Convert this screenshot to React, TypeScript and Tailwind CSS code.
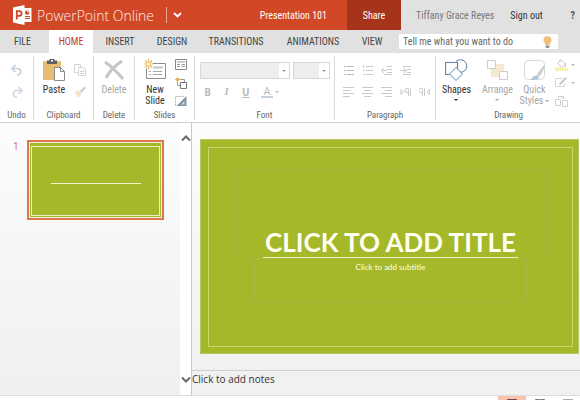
import { ReactNode, useState } from "react";
import clsx from "clsx";

const tabs = [
  { name: "HOME", className: "w-11" },
  { name: "INSERT", className: "w-[54px]" },
  { name: "DESIGN", className: "w-[50px]" },
  { name: "TRANSITIONS", className: "w-[78px]" },
  { name: "ANIMATIONS", className: "w-[76px]" },
  { name: "VIEW", className: "w-[42px]" },
];

const Caret = ({ className }: { className?: string }) => (
  <svg viewBox="0 0 4 2" className={clsx("h-[2px] w-1", className)}>
    <path d="M0 0h4L2 2z" fill="currentColor" />
  </svg>
);

const Group = ({
  label,
  className,
  children,
}: {
  label: string;
  className: string;
  children: ReactNode;
}) => (
  <section
    className={clsx("flex shrink-0 flex-col justify-between", className)}
  >
    <div className="flex">{children}</div>
    <h2 className="text-center text-[9px] leading-[10px] text-[#666]">
      {label}
    </h2>
  </section>
);

const IconButton = ({
  label,
  className,
  children,
}: {
  label: string;
  className?: string;
  children: ReactNode;
}) => (
  <button
    type="button"
    aria-label={label}
    className={clsx("flex items-center", className)}
  >
    {children}
  </button>
);

const BigButton = ({
  className,
  icon,
  children,
}: {
  className?: string;
  icon: ReactNode;
  children: ReactNode;
}) => (
  <button
    type="button"
    className={clsx(
      "flex flex-col items-center gap-[3px] text-[10px] leading-[11px]",
      className
    )}
  >
    {icon}
    <span className="flex flex-col items-center">{children}</span>
  </button>
);

const Logo = () => (
  <svg viewBox="0 0 20 20" className="h-5 w-5">
    <path d="M11 3h7.500v14H11z" fill="#fff" />
    <path d="M0 2.500 11.500 0v20L0 17.500z" fill="#fff" />
    <path
      d="M3.800 14.500V6.200h2.400a2.300 2.300 0 0 1 0 4.700H4"
      fill="none"
      stroke="#d24726"
      strokeWidth="1.800"
    />
    <circle cx="14.200" cy="7.500" r="2.300" fill="#d24726" />
    <path d="M14.500 4v3h3" stroke="#fff" fill="none" strokeWidth=".8" />
    <path d="M12 11.500h5M12 13.500h5" stroke="#d24726" />
  </svg>
);

const PasteIcon = () => (
  <svg viewBox="0 0 22 22" className="h-[22px] w-[22px]">
    <path d="M0 2h18v19H0z" fill="#e8bd72" />
    <path d="M4 1.500h2.500V0h5v1.500H14V5H4z" fill="#5f5f5f" />
    <path d="M8 1h2v1.500H8z" fill="#fff" />
    <path d="M11.500 8.500h6l4 4v9h-10z" fill="#fff" stroke="#8a8a8a" />
    <path d="M17.500 8.500v4h4" fill="none" stroke="#8a8a8a" />
  </svg>
);

const NewSlideIcon = () => (
  <svg viewBox="0 0 23 22" className="h-[22px] w-[23px]">
    <path d="M2.500 4.500h19v15h-19z" fill="#fff" stroke="#8d8d8d" />
    <path d="M9 7.500h10v2H9z" fill="#c4c4c4" />
    <path d="M5 12.500h2M9 12.500h9M5 15.500h2M9 15.500h9" stroke="#a8a8a8" />
    <circle cx="4.500" cy="5" r="4.500" fill="#fff" />
    <path
      d="M4.500 0v10M0 5h9M1 1.500l7 7M8 1.500l-7 7"
      stroke="#e8b65c"
      strokeWidth="1.200"
    />
    <circle cx="4.500" cy="5" r="1.500" fill="#fff" />
  </svg>
);

const ShapesIcon = () => (
  <svg
    viewBox="0 0 23 22"
    className="h-[22px] w-[23px]"
    fill="#fff"
    stroke="#5f86a8"
  >
    <circle cx="15.500" cy="7" r="6.300" />
    <path d="M.5 3.500h12v12H.5z" strokeWidth="1.200" />
    <path d="m11 8.500 6.500 6.500-6.500 6.500L4.500 15z" />
  </svg>
);

const ArrangeIcon = () => (
  <svg viewBox="0 0 22 22" className="h-[22px] w-[22px]">
    <path d="M4 5h13v13H4z" fill="#f7e8d2" />
    <path d="M.5 1.500h8v8h-8zM12.500 12.500h8v8h-8z" fill="#fff" stroke="#ccc" />
  </svg>
);

const QuickStylesIcon = () => (
  <svg viewBox="0 0 24 22" className="h-[22px] w-6">
    <rect
      x="1.500"
      y="1.500"
      width="20"
      height="19"
      rx="4"
      fill="#fff"
      stroke="#d8d8d8"
    />
    <path d="M8 21c1-4 4-4 6-5l2 3c-2 2-5 2-8 2z" fill="#b3c4d3" />
    <path d="m14 15 7-9 1.500 1L16.500 18z" fill="#c8cdd1" />
  </svg>
);

const Lines = ({ d, color = "#cacaca" }: { d: string; color?: string }) => (
  <svg viewBox="0 0 12 12" className="h-3 w-3">
    <path d={d} fill="none" stroke={color} />
  </svg>
);

const Header = () => (
  <header className="flex h-[30px] shrink-0 bg-[#e1e1e1] text-[10px]">
    <div className="flex flex-1 items-center bg-[#d24726] pr-5 pl-[13px] text-white">
      <Logo />
      <span className="ml-1 font-['Open_Sans','Noto_Sans',sans-serif] text-[14px] font-light whitespace-nowrap text-[#fdebe6]">
        PowerPoint Online
      </span>
      <span className="ml-3 h-4 w-px bg-[#eba593]" />
      <IconButton label="Switch app" className="ml-[6px]">
        <svg viewBox="0 0 9 6" className="h-[6px] w-[9px]">
          <path
            d="m1 1 3.500 3.500L8 1"
            fill="none"
            stroke="#fff"
            strokeWidth="1.800"
          />
        </svg>
      </IconButton>
      <span className="ml-auto whitespace-nowrap">Presentation 101</span>
    </div>
    <button type="button" className="h-[31px] w-[54px] bg-[#a5341a] text-white">
      Share
    </button>
    <div className="flex w-[179px] items-center pr-[5px] pl-[15px] whitespace-nowrap">
      <span className="text-[#777]">Tiffany Grace Reyes</span>
      <a href="#signout" className="ml-4 text-[#333]">
        Sign out
      </a>
      <button
        type="button"
        aria-label="Help"
        className="ml-auto font-bold text-[#555]"
      >
        ?
      </button>
    </div>
  </header>
);

const TabBar = () => {
  const [activeTab, setActiveTab] = useState<string>("HOME");

  return (
    <nav className="flex h-[23px] shrink-0 bg-[#e1e1e1] text-[10px] text-[#444]">
      <button type="button" className="w-[49px] pr-1 text-center">
        FILE
      </button>
      {tabs.map((tab) => (
        <button
          key={tab.name}
          type="button"
          onClick={() => setActiveTab(tab.name)}
          className={clsx("flex items-center justify-center", tab.className, {
            "bg-white text-[#c43e1c]": activeTab === tab.name,
          })}
        >
          {tab.name}
        </button>
      ))}
      <label className="my-1 mr-[22px] ml-[6px] flex min-w-0 flex-1 items-center bg-white pr-[6px] pl-1">
        <input
          type="text"
          aria-label="Tell me what you want to do"
          placeholder="Tell me what you want to do"
          className="min-w-0 flex-1 outline-none placeholder:text-[#666]"
        />
        <svg viewBox="0 0 9 12" className="h-3 w-[9px]">
          <path
            d="M4.500 0a4 4 0 0 1 2.300 7.300V9H2.200V7.300A4 4 0 0 1 4.500 0z"
            fill="#eec07c"
          />
          <path d="M2.500 9.500h4V11l-1 1h-2l-1-1z" fill="#8c8c8c" />
        </svg>
      </label>
    </nav>
  );
};

const Ribbon = () => (
  <div className="flex h-[70px] shrink-0 divide-x divide-[#d9d9d9] overflow-hidden border-b border-[#d0d0d0] bg-white pt-[3px] pb-[2px] text-[#333]">
    <Group label="Undo" className="w-[34px]">
      <div className="flex flex-col gap-[10px] pt-2 pl-[11px]">
        <IconButton label="Undo">
          <svg viewBox="0 0 12 12" className="h-3 w-3">
            <path
              d="M4.500 1 1 4.500 4.500 8M1 4.500h6a3.300 3.300 0 0 1 0 6.500H6"
              fill="none"
              stroke="#c3cfdd"
              strokeWidth="1.700"
            />
          </svg>
        </IconButton>
        <IconButton label="Redo">
          <svg viewBox="0 0 12 12" className="h-3 w-3">
            <path
              d="M7.500 1 11 4.500 7.500 8M11 4.500H5A3.300 3.300 0 0 0 5 11h1"
              fill="none"
              stroke="#cfd9e3"
              strokeWidth="1.700"
            />
          </svg>
        </IconButton>
      </div>
    </Group>

    <Group label="Clipboard" className="w-[60px]">
      <BigButton className="w-10 pt-[3px]" icon={<PasteIcon />}>
        Paste
      </BigButton>
      <div className="flex flex-col gap-[10px] pt-2">
        <IconButton label="Copy">
          <svg
            viewBox="0 0 12 12"
            className="h-3 w-3"
            fill="#fff"
            stroke="#d2d2d2"
          >
            <path d="M.5.5h6v8h-6z" />
            <path d="M4.500 3.500h4l3 2v6h-7zM6 7.500h4M6 9.500h4" />
          </svg>
        </IconButton>
        <IconButton label="Format painter">
          <svg viewBox="0 0 12 12" className="h-3 w-3">
            <path d="m1 6 3-2 4 4-4 4z" fill="#f4e3c8" />
            <path d="m6 5 4.500-4.500L12 2 7.500 7z" fill="#cdcdcd" />
          </svg>
        </IconButton>
      </div>
    </Group>

    <Group label="Delete" className="w-[41px]">
      <BigButton
        className="w-10 pt-[3px] text-[#a6a6a6]"
        icon={
          <svg viewBox="0 0 22 22" className="h-[22px] w-[22px]">
            <path
              d="M2 3c6 4 12 10 18 17M19 2C13 6 6 13 3 19"
              fill="none"
              stroke="#c6c6c6"
              strokeWidth="3"
            />
          </svg>
        }
      >
        Delete
      </BigButton>
    </Group>

    <Group label="Slides" className="w-[60px]">
      <BigButton className="w-10 pt-[3px]" icon={<NewSlideIcon />}>
        <span>New</span>
        <span>Slide</span>
      </BigButton>
      <div className="flex flex-col gap-[6px] pt-[3px]">
        <IconButton label="Layout">
          <svg viewBox="0 0 12 12" className="h-3 w-3">
            <path d="M.5.5h11v10H.5z" fill="#fff" stroke="#8a8a8a" />
            <path
              d="M2 3h8M2 5.500h3M2 7.500h3M6.500 5.500H10M6.500 7.500H10"
              stroke="#9a9a9a"
            />
          </svg>
        </IconButton>
        <IconButton label="Duplicate slide">
          <svg viewBox="0 0 12 12" className="h-3 w-3">
            <path d="M2.500 2.500h7v6h-7z" fill="#fff" stroke="#999" />
            <path d="M5.500 5.500h6v6h-6z" fill="#fff" stroke="#777" />
            <path d="M2.500 0v5M0 2.500h5M1 1l3 3M4 1 1 4" stroke="#e8b65c" />
          </svg>
        </IconButton>
        <IconButton label="Hide slide">
          <svg viewBox="0 0 12 12" className="h-3 w-3">
            <path
              d="M.5 10.500V1.500h9"
              fill="none"
              stroke="#b5b5b5"
              strokeDasharray="2 1"
            />
            <path d="M11.500 1v10H1.500z" fill="#8294a5" />
            <path d="M6 9.500 9.500 6v3.500z" fill="#cdd8e2" />
          </svg>
        </IconButton>
      </div>
    </Group>

    <Group label="Font" className="w-[140px]">
      <div className="flex flex-col gap-[7px] pt-[6px] pl-[5px]">
        <div className="flex gap-[3px] text-[#999]">
          <label className="relative flex">
            <select
              disabled
              aria-label="Font name"
              className="h-[17px] w-[90px] appearance-none border border-[#d6d6d6] bg-[#eee]"
            />
            <span className="absolute top-px right-px flex h-[15px] w-[10px] items-center justify-center bg-white">
              <Caret />
            </span>
          </label>
          <label className="relative flex">
            <select
              disabled
              aria-label="Font size"
              className="h-[17px] w-[37px] appearance-none border border-[#d6d6d6] bg-[#eee]"
            />
            <span className="absolute top-px right-px flex h-[15px] w-[10px] items-center justify-center bg-white">
              <Caret />
            </span>
          </label>
        </div>
        <div className="flex items-center gap-3 pl-1 font-['Open_Sans','Noto_Sans',sans-serif] text-[10px] leading-3 text-[#bababa]">
          <button type="button" className="w-[7px] font-bold">
            B
          </button>
          <button type="button" className="w-[7px] font-serif font-bold italic">
            I
          </button>
          <button type="button" className="w-[7px] font-bold underline">
            U
          </button>
          <button
            type="button"
            aria-label="Font color"
            className="flex items-center gap-[2px]"
          >
            <span className="w-3 border-b-2 border-[#c5d0da] text-[11px] leading-[10px]">
              A
            </span>
            <Caret />
          </button>
        </div>
      </div>
    </Group>

    <Group label="Paragraph" className="w-[101px]">
      <div className="flex flex-col gap-[10px] pt-2 pl-2">
        <div className="flex gap-[7px]">
          <IconButton label="Bullets">
            <Lines
              color="#b8b8b8"
              d="M1 2.500h2M4 2.500h7M1 6.500h2M4 6.500h7M1 10.500h2M4 10.500h7"
            />
          </IconButton>
          <IconButton label="Numbering">
            <Lines d="M1.500 1v3M4 2.500h7M1 6.500h2M4 6.500h7M1 10.500h2M4 10.500h7" />
          </IconButton>
          <IconButton label="Decrease indent">
            <Lines d="M5 2.500h6M6 5.500h5M6 8.500h5M3 10.500h8M6 6.500H.5M3 4 .5 6.500 3 9" />
          </IconButton>
          <IconButton label="Increase indent">
            <Lines d="M3 2.500h8M7 5.500h4M7 8.500h4M3 10.500h8M.5 6.500H6M3.500 4 6 6.500 3.500 9" />
          </IconButton>
        </div>
        <div className="flex gap-[7px]">
          <IconButton label="Align left">
            <Lines d="M0 1.500h11M0 4.500h7M0 7.500h11M0 10.500h7" />
          </IconButton>
          <IconButton label="Align center">
            <Lines d="M0 1.500h11M2 4.500h7M0 7.500h11M2 10.500h7" />
          </IconButton>
          <IconButton label="Align right">
            <Lines d="M0 1.500h11M4 4.500h7M0 7.500h11M4 10.500h7" />
          </IconButton>
          <IconButton label="Left to right">
            <Lines d="M1 3.500 3.500 6 1 8.500zM10.500 10V2.500M8.500 10V2.500H7a1.500 1.500 0 0 0 0 4h1.500" />
          </IconButton>
          <IconButton label="Right to left">
            <Lines d="M10.500 3.500 8 6l2.500 2.500zM5.500 10V2.500M3.500 10V2.500H2a1.500 1.500 0 0 0 0 4h1.500" />
          </IconButton>
        </div>
      </div>
    </Group>

    <Group label="Drawing" className="w-[145px]">
      <BigButton className="w-[41px] pt-[3px]" icon={<ShapesIcon />}>
        <span>Shapes</span>
        <Caret className="mt-1" />
      </BigButton>
      <BigButton
        className="w-[41px] pt-[3px] text-[#a6a6a6]"
        icon={<ArrangeIcon />}
      >
        <span>Arrange</span>
        <Caret className="mt-1" />
      </BigButton>
      <BigButton
        className="w-[33px] pt-[3px] text-[#a6a6a6]"
        icon={<QuickStylesIcon />}
      >
        <span>Quick</span>
        <span className="flex items-center gap-[2px]">
          Styles <Caret />
        </span>
      </BigButton>
      <div className="flex flex-col gap-[6px] pt-[2px] pl-1 text-[#bbb]">
        <IconButton label="Shape fill" className="gap-[3px]">
          <svg viewBox="0 0 13 13" className="h-[13px] w-[13px]">
            <path d="M0 9.500h13V13H0z" fill="#f8f5a8" />
            <path d="m2.500 5 4-3 4 4-4 3.500z" fill="#fff" stroke="#c9c9c9" />
            <path d="M5 4V1M10.500 5v4" stroke="#c9c9c9" />
          </svg>
          <Caret />
        </IconButton>
        <IconButton label="Shape outline" className="gap-[3px]">
          <svg viewBox="0 0 13 12" className="h-3 w-[13px]">
            <path d="M8 1.500H.5v8h9V6" fill="none" stroke="#d6d6d6" />
            <path d="m4 8 1-2.500L11 0l1 1-6 6.500z" fill="#bdc5cc" />
          </svg>
          <Caret />
        </IconButton>
        <IconButton label="Change shape">
          <svg
            viewBox="0 0 13 13"
            className="h-[13px] w-[13px]"
            fill="#fff"
            stroke="#d0d0d0"
          >
            <path d="M.5 4.500h5v6h-5zM7.500 5.500h5v6h-5z" />
            <path d="M3.500 3V1.500h5V4M7 2.500l1.500 1.500L10 2.500" fill="none" />
          </svg>
        </IconButton>
      </div>
    </Group>
  </div>
);

const SlidePanel = () => (
  <aside className="flex w-[192px] shrink-0 border-r border-[#c8c8c8] bg-linear-to-b from-[#fcfcfc] to-[#f0f0f0]">
    <div className="flex flex-1 items-start gap-2 pt-[17px] pl-[13px]">
      <span className="w-[6px] font-['Open_Sans','Noto_Sans',sans-serif] text-[10px] leading-3 text-[#d9694a]">
        1
      </span>
      <button
        type="button"
        aria-label="Slide 1"
        className="flex h-20 w-[137px] border-2 border-[#dc7555] bg-[#a5b829] p-px outline-1 -outline-offset-3 outline-[#f3f5d8]"
      >
        <span className="m-px mt-[3px] flex flex-1 items-center justify-center self-stretch border border-[#eef0c4]">
          <span className="mt-1 h-px w-[90px] bg-[#f2f4cf]" />
        </span>
      </button>
    </div>
    <div className="flex w-[11px] flex-col items-center justify-between bg-white pt-3 pb-3">
      <IconButton label="Scroll up">
        <svg viewBox="0 0 10 7" className="h-[7px] w-[10px]">
          <path
            d="m1 5.500 4-4 4 4"
            fill="none"
            stroke="#6a6a6a"
            strokeWidth="2"
          />
        </svg>
      </IconButton>
      <IconButton label="Scroll down">
        <svg viewBox="0 0 10 7" className="h-[7px] w-[10px]">
          <path
            d="m1 1.500 4 4 4-4"
            fill="none"
            stroke="#6a6a6a"
            strokeWidth="2"
          />
        </svg>
      </IconButton>
    </div>
  </aside>
);

const Editor = () => (
  <main className="flex min-w-0 flex-1 flex-col bg-linear-to-b from-[#fcfcfc] to-[#f0f0f0]">
    <div className="flex-1 pt-4 pr-px pl-2">
      <div className="flex aspect-[379/215] flex-col border border-[#b9c66a] bg-[#a5b829] p-[7px] pr-[5px] pb-[6px] font-[Lato,sans-serif] text-[#fffff0]">
        <div className="flex flex-1 flex-col items-center border border-[#c9d56f] pt-[22px]">
          <button
            type="button"
            className="flex h-[88px] w-[86%] items-end justify-center border border-b-0 border-[#adb844] text-[26px] leading-[30px] font-bold whitespace-nowrap"
          >
            <span className="border-b border-[#eef2c0] px-[2px]">
              CLICK TO ADD TITLE
            </span>
          </button>
          <button
            type="button"
            className="flex h-11 w-[75%] justify-center border border-[#adb844] pt-[3px] text-[8px] leading-[10px]"
          >
            Click to add subtitle
          </button>
        </div>
      </div>
    </div>
    <textarea
      aria-label="Notes"
      placeholder="Click to add notes"
      className="h-[25px] shrink-0 resize-none border-t border-[#d0d0d0] bg-[#f1f1f1] font-['Open_Sans','Noto_Sans',sans-serif] text-[10px] leading-4 outline-none placeholder:text-[#333]"
    />
  </main>
);

const StatusBar = () => (
  <footer className="flex h-[5px] shrink-0 items-start justify-end overflow-hidden border-t border-[#ddd] bg-white pr-[7px]">
    <IconButton label="Editing view" className="bg-[#f8c4ae] px-[9px] pt-[3px]">
      <svg viewBox="0 0 10 8" className="h-2 w-[10px]">
        <path d="M.5.5h9v7h-9zM3.500 0v8" fill="none" stroke="#6b4a3f" />
      </svg>
    </IconButton>
    <IconButton label="Reading view" className="px-[9px] pt-[3px]">
      <svg viewBox="0 0 10 8" className="h-2 w-[10px]">
        <path d="M.5.5H4.500l.5 1 .5-1h4v7h-9zM5 1v7" fill="none" stroke="#777" />
      </svg>
    </IconButton>
    <IconButton label="Slide show" className="pt-[3px] pl-[9px]">
      <svg viewBox="0 0 10 8" className="h-2 w-[10px]">
        <path d="M0 .5h10M1.500 1v5h7V1" fill="none" stroke="#aaa" />
      </svg>
    </IconButton>
  </footer>
);

const App = () => {
  return (
    <div className="flex h-screen flex-col overflow-hidden bg-white font-['Roboto_Condensed','Noto_Sans',sans-serif]">
      <Header />
      <TabBar />
      <Ribbon />
      <div className="flex min-h-0 flex-1">
        <SlidePanel />
        <Editor />
      </div>
      <StatusBar />
    </div>
  );
};

export default App;
